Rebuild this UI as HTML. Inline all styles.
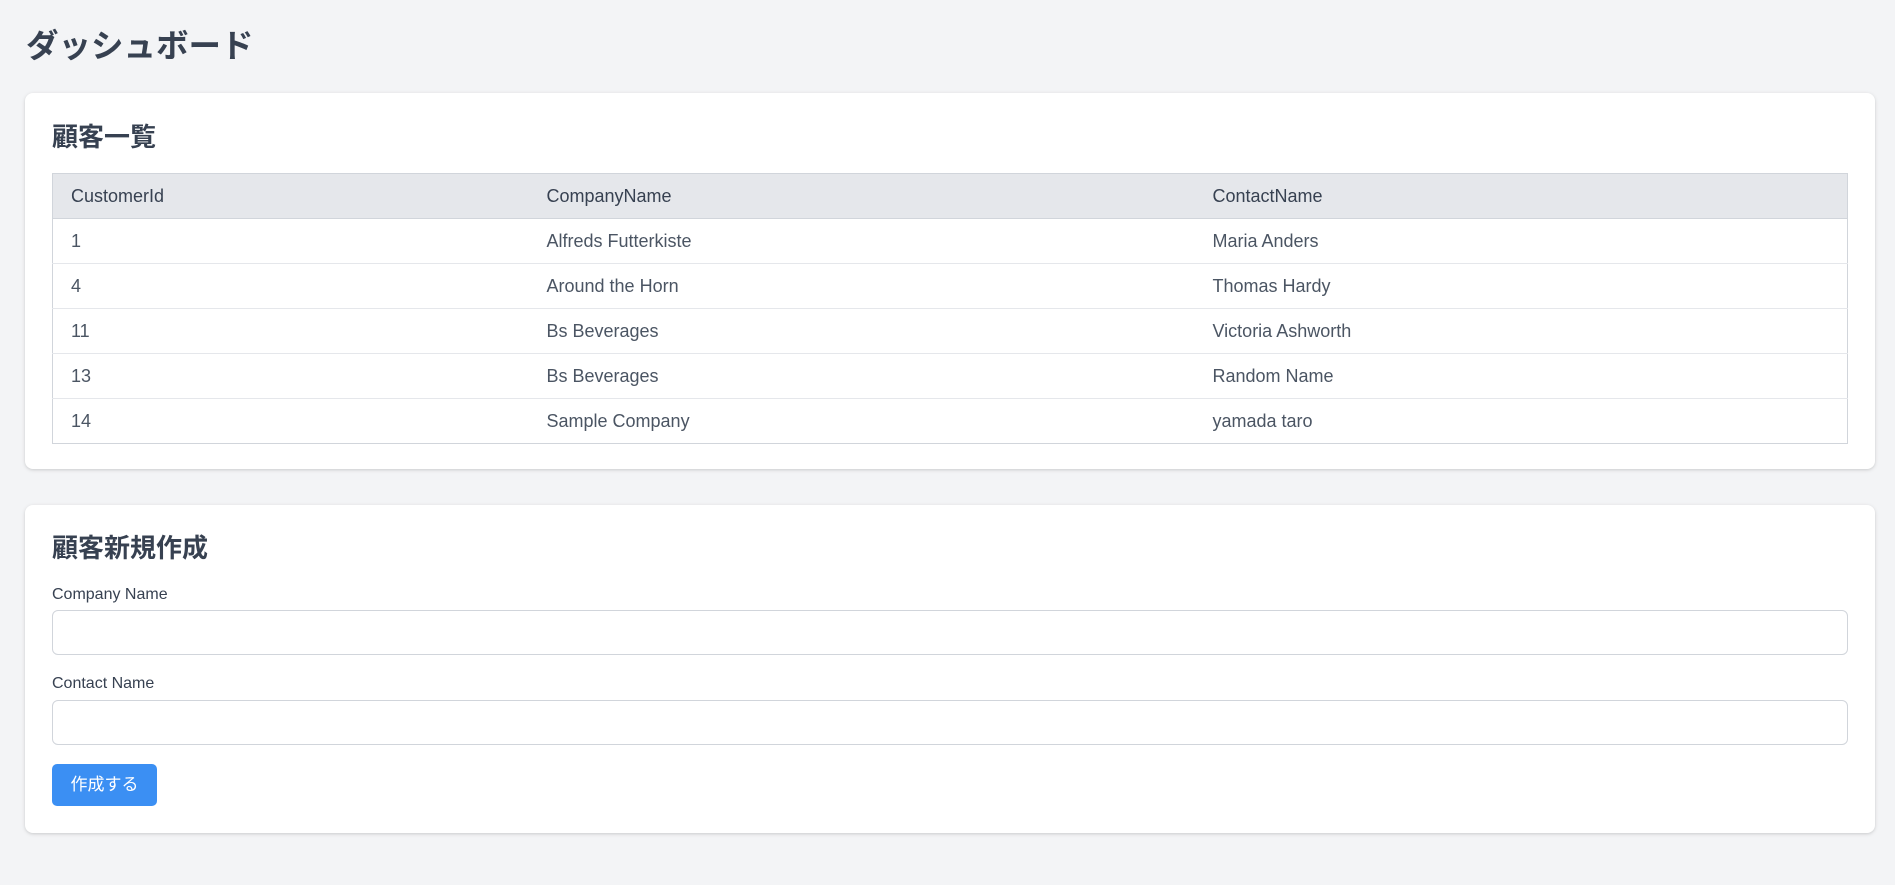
<!DOCTYPE html>
<html><head><meta charset="utf-8"><style>
*{box-sizing:border-box;margin:0;padding:0}
body{width:1895px;height:885px;background:#f3f4f6;font-family:"Liberation Sans","Noto Sans CJK JP",sans-serif;color:#374151;position:relative;overflow:hidden}
h1{position:absolute;left:26px;top:25px;font-size:32.5px;line-height:42px;font-weight:bold;color:#374151}
.card{position:absolute;left:25px;width:1850px;background:#fff;border-radius:8px;box-shadow:0 1px 4px rgba(0,0,0,.12),0 1px 2px rgba(0,0,0,.06)}
h2{position:absolute;left:27px;font-size:26px;line-height:34px;font-weight:bold;color:#374151}
table{position:absolute;left:27px;top:80px;width:1796px;border-collapse:collapse;table-layout:fixed;border:1px solid #d1d5db}
th,td{height:45px;padding:0 18px;text-align:left;font-size:18px;vertical-align:middle}
th{background:#e5e7eb;font-weight:500;color:#374151;border-bottom:1px solid #d1d5db}
td{color:#4b5563;border-top:1px solid #e5e7eb}
label{position:absolute;left:27px;font-size:16px;font-weight:500;color:#374151}
.in{position:absolute;left:27px;width:1796px;height:45px;border:1px solid #d1d5db;border-radius:6px;background:#fff}
.btn{position:absolute;left:27px;top:259px;width:105px;height:42px;background:#3b8ff3;color:#fff;border-radius:5px;font-size:17px;line-height:42px;text-align:center}
</style></head><body>
<h1>ダッシュボード</h1>
<div class="card" style="top:93px;height:376px">
<h2 style="top:27px">顧客一覧</h2>
<table>
<colgroup><col style="width:476px"><col style="width:666px"><col></colgroup>
<tr><th>CustomerId</th><th>CompanyName</th><th>ContactName</th></tr>
<tr><td>1</td><td>Alfreds Futterkiste</td><td>Maria Anders</td></tr>
<tr><td>4</td><td>Around the Horn</td><td>Thomas Hardy</td></tr>
<tr><td>11</td><td>Bs Beverages</td><td>Victoria Ashworth</td></tr>
<tr><td>13</td><td>Bs Beverages</td><td>Random Name</td></tr>
<tr><td>14</td><td>Sample Company</td><td>yamada taro</td></tr>
</table>
</div>
<div class="card" style="top:505px;height:328px">
<h2 style="top:26px">顧客新規作成</h2>
<label style="top:81px">Company Name</label>
<div class="in" style="top:105px"></div>
<label style="top:170px">Contact Name</label>
<div class="in" style="top:195px"></div>
<div class="btn">作成する</div>
</div>
</body></html>
